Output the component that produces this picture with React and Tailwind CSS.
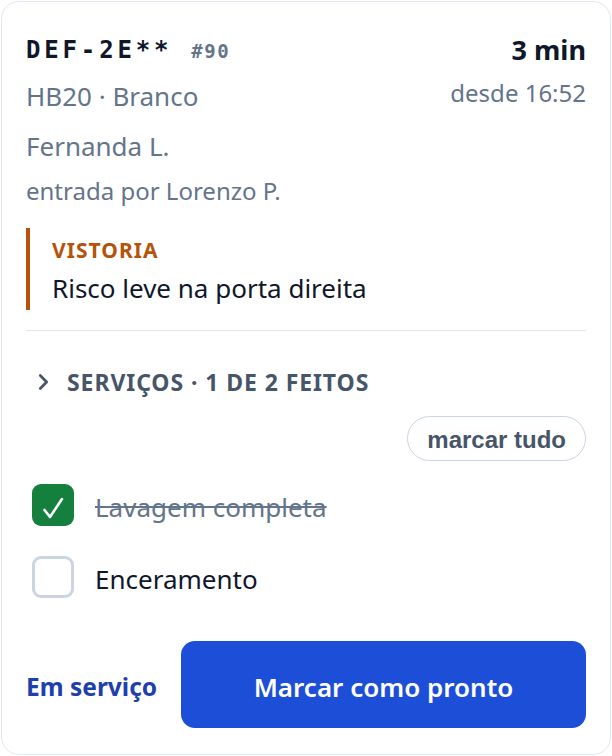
import React from "react";

export default function App() {
  return (
    <div className="bg-white p-px" style={{ fontFamily: '"Noto Sans", "Open Sans", sans-serif' }}>
      <div className="flex h-[754px] flex-col rounded-[18px] border border-[#e2e8f0] bg-white px-6 pt-[28px]">
        {/* Header */}
        <div className="flex items-start justify-between">
          <div className="flex flex-col">
            <div className="flex items-baseline leading-[40px]">
              <span
                className="text-[24px] font-bold tracking-[0.16em] text-[#0f172a]"
                style={{ fontFamily: '"DejaVu Sans Mono", monospace' }}
              >
                DEF-2E**
              </span>
              <span
                className="ml-[19px] text-[19px] font-bold tracking-[0.08em] text-[#64748b]"
                style={{ fontFamily: '"DejaVu Sans Mono", monospace' }}
              >
                #90
              </span>
            </div>
            <div className="text-[26px] leading-[50px] text-[#64748b]">HB20 · Branco</div>
            <div className="text-[26px] leading-[50px] text-[#64748b]">Fernanda L.</div>
            <div className="text-[24px] leading-[39px] text-[#64748b]">entrada por Lorenzo P.</div>
          </div>
          <div className="flex flex-col items-end">
            <div className="text-[27px] font-bold leading-[40px] text-[#0f172a]">3 min</div>
            <div className="text-[24px] leading-[46px] text-[#64748b]">desde 16:52</div>
          </div>
        </div>

        {/* Vistoria */}
        <div className="mt-[18px] border-l-4 border-[#b45309] pb-[2px] pl-[22px] pt-[4px]">
          <div className="text-[21px] font-bold leading-[36px] tracking-[0.05em] text-[#b45309]">VISTORIA</div>
          <div className="text-[26px] leading-[40px] text-[#0f172a]">Risco leve na porta direita</div>
        </div>

        <div className="mt-[20px] h-px bg-[#e2e8f0]" />

        {/* Serviços */}
        <div className="mt-[31px] flex items-center leading-[40px]">
          <svg width="22" height="22" viewBox="0 0 24 24" className="ml-[6px] text-[#475569]" fill="none" stroke="currentColor" strokeWidth="3" strokeLinecap="round" strokeLinejoin="round">
            <polyline points="9 5 16 12 9 19" />
          </svg>
          <span className="ml-[13px] text-[23px] font-bold tracking-[0.04em] text-[#475569]">
            SERVIÇOS · 1 DE 2 FEITOS
          </span>
        </div>

        <div className="mt-[14px] flex justify-end">
          <button
            className="h-[45px] rounded-full border border-[#cbd5e1] bg-white px-[19px] pt-[3px] text-[24px] font-bold text-[#475569]"
            style={{ fontFamily: '"Liberation Sans", Arial, sans-serif' }}
          >
            marcar tudo
          </button>
        </div>

        <div className="mt-[23px] flex h-[42px] items-center">
          <div className="ml-[6px] flex h-[42px] w-[42px] items-center justify-center rounded-[9px] bg-[#15803d]">
            <svg width="42" height="42" viewBox="0 0 42 42" fill="none" stroke="white" strokeWidth="2.6" strokeLinecap="round" strokeLinejoin="round">
              <path d="M12.5 26 L18 33 L30 15" />
            </svg>
          </div>
          <span className="ml-[21px] pt-[4px] text-[26px] leading-[36px] text-[#64748b] line-through">Lavagem completa</span>
        </div>

        <div className="mt-[30px] flex h-[42px] items-center">
          <div className="ml-[6px] h-[42px] w-[42px] rounded-[9px] border-[3px] border-[#cbd5e1] bg-white" />
          <span className="ml-[21px] pt-[4px] text-[26px] leading-[36px] text-[#0f172a]">Enceramento</span>
        </div>

        {/* Footer */}
        <div className="mt-[43px] flex items-center">
          <span className="pt-[6px] text-[24.5px] font-bold text-[#1e40af]">Em serviço</span>
          <button className="ml-auto flex h-[87px] w-[405px] items-center justify-center rounded-[14px] bg-[#1d4ed8] pt-[5px] text-[26px] font-semibold text-white">
            Marcar como pronto
          </button>
        </div>
      </div>
    </div>
  );
}
